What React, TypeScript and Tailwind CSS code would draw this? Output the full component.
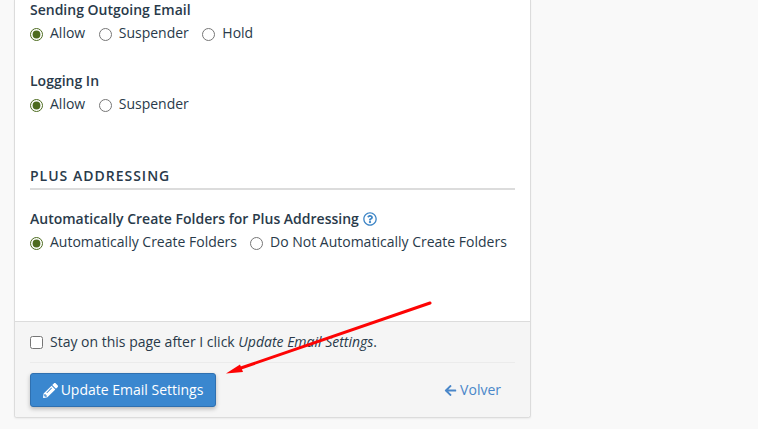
import React from 'react';
import { FaPencilAlt, FaArrowLeft, FaRegQuestionCircle } from 'react-icons/fa';

const Radio = ({ label, name, checked = false }: { label: string; name: string; checked?: boolean }) => (
  <label className="flex items-center gap-[7px]">
    <input type="radio" name={name} defaultChecked={checked} className="m-0 h-[13px] w-[13px] translate-y-[1px] accent-[#4d6b1f]" />
    <span>{label}</span>
  </label>
);

const App = () => {
  return (
    <div className="h-[429px] overflow-hidden bg-[#f9f9f9] pl-[14px] text-[14px] leading-[20px] text-[#293a4a] [font-family:'Open_Sans',sans-serif]">
      <div className="relative h-[418px] w-[517px] rounded-b-[3px] border border-t-0 border-[#dcdcdc] bg-white shadow-[0_1px_2px_rgba(0,0,0,0.06)]">
        <div className="h-[321px] px-[15px]">
          <div className="font-semibold">Sending Outgoing Email</div>
          <div className="mt-[3px] flex gap-[13.5px]">
            <Radio name="send" label="Allow" checked />
            <Radio name="send" label="Suspender" />
            <Radio name="send" label="Hold" />
          </div>
          <div className="mt-[28px] font-semibold">Logging In</div>
          <div className="mt-[3px] flex gap-[13.5px]">
            <Radio name="login" label="Allow" checked />
            <Radio name="login" label="Suspender" />
          </div>
          <h2 className="mt-[52px] border-b-2 border-[#dcdcdc] pb-[2px] text-[14px] font-semibold tracking-[1px] uppercase">
            Plus Addressing
          </h2>
          <div className="mt-[19px] flex items-center gap-[4px] font-semibold">
            Automatically Create Folders for Plus Addressing
            <FaRegQuestionCircle className="text-[14px] text-[#3d85c6]" />
          </div>
          <div className="mt-[3px] flex gap-[13px]">
            <Radio name="plus" label="Automatically Create Folders" checked />
            <Radio name="plus" label="Do Not Automatically Create Folders" />
          </div>
        </div>
        <div className="h-[96px] rounded-b-[3px] border-t border-[#dcdcdc] bg-[#f5f5f5] px-[15px]">
          <label className="flex h-[41px] items-center gap-[7px] border-b border-[#ebebeb]">
            <input type="checkbox" className="m-0 h-[13px] w-[13px]" />
            <span>
              Stay on this page after I click <em>Update Email Settings</em>.
            </span>
          </label>
          <div className="mt-[10px] flex items-center justify-between pr-[14px]">
            <button className="flex h-[34px] w-[186px] items-center justify-center gap-[3px] rounded-[3px] border border-[#2f70b0] bg-[#3a87cf] text-white shadow-[0_2px_4px_rgba(0,0,0,0.25)]">
              <FaPencilAlt className="text-[15px]" />
              Update Email Settings
            </button>
            <a className="flex items-center gap-[3px] text-[#4a87c9]">
              <FaArrowLeft className="text-[13px]" />
              Volver
            </a>
          </div>
        </div>
      </div>
      <svg className="absolute top-0 left-0" width="758" height="429" viewBox="0 0 758 429" fill="none">
        <path d="M430 303 L238 369" stroke="#fd0404" strokeWidth="3" strokeLinecap="round" />
        <path d="M226 373.5 L240 364.5 L243 372 Z" fill="#fd0404" />
      </svg>
    </div>
  );
};

export default App;
